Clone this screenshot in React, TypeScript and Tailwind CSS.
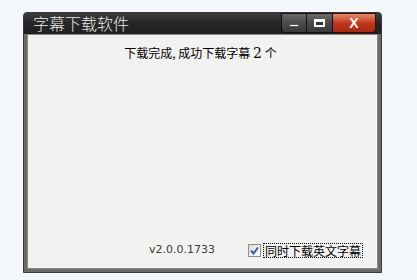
import React from "react";

const font = { fontFamily: '"Noto Sans CJK SC", "Liberation Sans", sans-serif' };

export default function App() {
  return (
    <div className="w-[417px] h-[280px] bg-[#f4f7fb] pt-[12px] pl-[23px]" style={font}>
      <div className="w-[359px] h-[261px] flex flex-col rounded-t-[4px] bg-[#2a2a2a] border border-[#3a3a3a] overflow-hidden">
        <div className="h-[21px] flex items-start relative bg-gradient-to-b from-[#3c3c3c] via-[#262626] to-[#1f1f1f]">
          <div className="pl-[9px] pt-[1px] text-[16px] leading-[19px] text-[#ececec]" style={{ fontFamily: '"Noto Sans CJK SC", serif', fontWeight: 300 }}>
            字幕下载软件
          </div>
          <div className="ml-auto mr-[5px] flex h-[20px]">
            <div className="w-[26px] h-[20px] rounded-bl-[4px] border border-[#111] bg-gradient-to-b from-[#6a6a6a] via-[#4a4a4a] to-[#3a3a3a] flex items-end justify-center pb-[5px]">
              <div className="w-[10px] h-[3px] bg-white border border-[#555]" />
            </div>
            <div className="w-[26px] h-[20px] border-y border-r border-[#111] bg-gradient-to-b from-[#6a6a6a] via-[#4a4a4a] to-[#3a3a3a] flex items-center justify-center">
              <div className="w-[11px] h-[8px] border-[2px] border-white border-t-[3px] bg-[#333]" />
            </div>
            <div className="w-[43px] h-[20px] rounded-br-[4px] border-y border-r border-[#3a0d05] bg-gradient-to-b from-[#e48a70] via-[#c2371c] to-[#a8280f] flex items-center justify-center text-white font-bold text-[14px] leading-none" style={{ fontFamily: '"Liberation Sans", sans-serif' }}>
              X
            </div>
          </div>
        </div>
        <div className="flex-1 bg-[#6c6c6c] px-[3px] pb-[3px]">
          <div className="h-full bg-[#f2f2f1] border border-[#8a8a8a] flex flex-col items-center relative">
            <div className="mt-[10px] -ml-[4px] text-[12px] leading-[16px] text-black">
              下载完成, 成功下载字幕 <span className="text-[14px]" style={{ fontFamily: '"DejaVu Serif", serif' }}>2</span> 个
            </div>
            <div className="mt-auto mb-[10px] w-full flex items-center text-[12px] leading-[16px]">
              <span className="ml-[121px] text-[#3a3a3a]" style={{ fontFamily: '"DejaVu Sans", sans-serif', fontSize: 11 }}>v2.0.0.1733</span>
              <div className="ml-[33px] w-[13px] h-[13px] border border-[#8f8f8f] bg-gradient-to-br from-[#dcdcdc] to-[#ffffff] flex items-center justify-center">
                <svg width="9" height="9" viewBox="0 0 9 9"><path d="M1 4.5 L3.5 7.5 L8 1.5" stroke="#3a5fa8" strokeWidth="2" fill="none" /></svg>
              </div>
              <span className="ml-[2px] px-[1px] border border-dotted border-black text-black leading-[13px]">同时下载英文字幕</span>
            </div>
          </div>
        </div>
      </div>
    </div>
  );
}
